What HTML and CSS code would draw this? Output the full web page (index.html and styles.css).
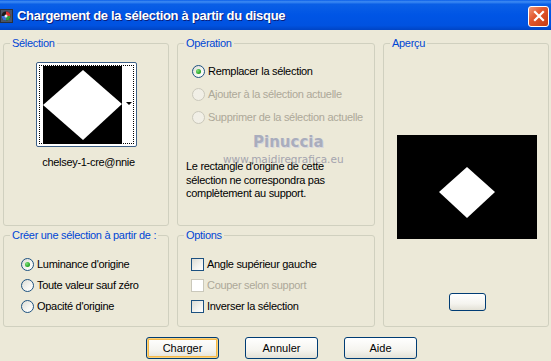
FILE: index.html
```html
<!DOCTYPE html>
<html lang="fr">
<head>
    <meta charset="UTF-8">
    <title>Chargement de la sélection à partir du disque</title>
    <link rel="stylesheet" href="styles.css">
</head>
<body>
    <div class="window">
        <div class="titlebar">
            <svg class="app-icon" width="13" height="14" viewBox="0 0 13 14">
                <rect x="0" y="0" width="13" height="14" fill="#2b2f3a"/>
                <rect x="1" y="1" width="11" height="12" fill="#4a5566"/>
                <circle cx="6" cy="7" r="4.5" fill="#1a1a1a"/>
                <path d="M6 2.5 A4.5 4.5 0 0 1 10.5 7 L6 7 Z" fill="#d33"/>
                <path d="M10.5 7 A4.5 4.5 0 0 1 6 11.5 L6 7 Z" fill="#2c9a3c"/>
                <path d="M6 11.5 A4.5 4.5 0 0 1 1.5 7 L6 7 Z" fill="#3a6fd8"/>
                <circle cx="6" cy="7" r="1.5" fill="#eee"/>
            </svg>
            <span class="title">Chargement de la sélection à partir du disque</span>
            <button class="close" aria-label="Fermer">
                <svg width="12" height="12" viewBox="0 0 12 12">
                    <path d="M2 2 L10 10 M10 2 L2 10" stroke="#fff" stroke-width="2.2" stroke-linecap="square"/>
                </svg>
            </button>
        </div>

        <div class="content">
            <div class="groups">
                <fieldset class="group group-sel">
                    <legend>Sélection</legend>
                    <div class="thumb">
                        <div class="thumb-focus">
                            <svg class="thumb-img" width="79" height="78" viewBox="0 0 79 78">
                                <rect width="79" height="78" fill="#000"/>
                                <polygon points="0,39 40,4 79,38 40,74" fill="#fff"/>
                            </svg>
                            <span class="thumb-drop"><i class="drop-arrow"></i></span>
                        </div>
                    </div>
                    <div class="thumb-name">chelsey-1-cre@nnie</div>
                </fieldset>

                <fieldset class="group group-op">
                    <legend>Opération</legend>
                    <div class="opt-list">
                        <label class="opt"><span class="radio checked"></span>Remplacer la sélection</label>
                        <label class="opt disabled"><span class="radio"></span>Ajouter à la sélection actuelle</label>
                        <label class="opt disabled"><span class="radio"></span>Supprimer de la sélection actuelle</label>
                    </div>
                    <p class="note">Le rectangle d'origine de cette<br>sélection ne correspondra pas<br>complètement au support.</p>
                    <span class="wm-name">Pinuccia</span>
                    <span class="wm-url">www.maidiregrafica.eu</span>
                </fieldset>

                <fieldset class="group group-preview">
                    <legend>Aperçu</legend>
                    <svg class="preview-img" width="140" height="104" viewBox="0 0 140 104">
                        <rect width="140" height="104" fill="#000"/>
                        <polygon points="42,57 70,32 98,57 70,83" fill="#fff"/>
                    </svg>
                    <button class="btn btn-small"></button>
                </fieldset>

                <fieldset class="group group-create">
                    <legend>Créer une sélection à partir de :</legend>
                    <div class="opt-list">
                        <label class="opt"><span class="radio checked"></span>Luminance d'origine</label>
                        <label class="opt"><span class="radio"></span>Toute valeur sauf zéro</label>
                        <label class="opt"><span class="radio"></span>Opacité d'origine</label>
                    </div>
                </fieldset>

                <fieldset class="group group-options">
                    <legend>Options</legend>
                    <div class="opt-list">
                        <label class="opt"><span class="check"></span>Angle supérieur gauche</label>
                        <label class="opt disabled"><span class="check"></span>Couper selon support</label>
                        <label class="opt"><span class="check"></span>Inverser la sélection</label>
                    </div>
                </fieldset>
            </div>

            <div class="actions">
                <button class="btn btn-default">Charger</button>
                <button class="btn">Annuler</button>
                <button class="btn">Aide</button>
            </div>
        </div>
    </div>
</body>
</html>
```

FILE: styles.css
```css
:root {
    --face: #ece9d8;
    --group-line: #d0d0bf;
    --label-blue: #0046d5;
    --ctl-border: #1c5180;
    --disabled: #aca899;
}
* { box-sizing: border-box; }
body { margin: 0; background: var(--face); font-family: "Liberation Sans", Arial, sans-serif; font-size: 11px; letter-spacing: -0.3px; color: #000; }
.window { width: 551px; height: 361px; overflow: hidden; background: var(--face); }

/* title bar */
.titlebar { height: 30px; display: flex; align-items: center; padding: 0 2px 0 0; background: linear-gradient(to bottom, #0a5de8 0%, #3f8cf3 6%, #0a5fe6 14%, #0055e5 50%, #0052e0 85%, #0044c4 100%); }
.app-icon { display: block; margin: 1px 4px 0 0; }
.title { flex: 1; color: #fff; font-weight: bold; font-size: 13px; letter-spacing: -0.3px; text-shadow: 1px 1px 0 #0a1e7a; padding-top: 1px; }
.close { width: 21px; height: 21px; padding: 0; border: 1px solid #fff; border-radius: 3px; background: linear-gradient(135deg, #f19879 0%, #e2582f 40%, #c63b12 100%); display: flex; align-items: center; justify-content: center; margin-top: 2px; }
.close svg { display: block; }

/* group boxes (legend follows the fieldset's left padding, so keep it at 0) */
.content { padding: 7px 0 0 3px; }
.groups { display: grid; grid-template-columns: 166px 198px 166px; grid-template-rows: 189px 98px; column-gap: 8px; row-gap: 3px; }
.group { margin: 0; padding: 0; min-width: 0; border: 1px solid var(--group-line); border-radius: 3px; position: relative; }
.group legend { margin-left: 6px; padding: 0 2px; line-height: 13px; color: var(--label-blue); white-space: nowrap; }
.group-sel { grid-column: 1; grid-row: 1; display: flex; flex-direction: column; align-items: center; padding-top: 12px; }
.group-op { grid-column: 2; grid-row: 1; padding-top: 13px; }
.group-preview { grid-column: 3; grid-row: 1 / 3; display: flex; flex-direction: column; align-items: center; padding-top: 85px; }
.group-create { grid-column: 1; grid-row: 2; padding-top: 14px; }
.group-options { grid-column: 2; grid-row: 2; padding-top: 14px; }

/* selection thumbnail */
.thumb { width: 101px; height: 85px; margin-left: 1px; border: 1px solid #3c5f86; border-radius: 2px; background: #fff; padding: 2px; }
.thumb-focus { height: 100%; border: 1px dotted #000; display: flex; padding: 0 0 0 3px; }
.thumb-img { display: block; }
.thumb-drop { flex: 1; display: flex; align-items: center; justify-content: flex-end; padding: 0 1px 3px 0; }
.drop-arrow { width: 0; height: 0; border-left: 3px solid transparent; border-right: 3px solid transparent; border-top: 3px solid #000; }
.thumb-name { margin-top: 9px; line-height: 13px; padding-left: 5px; }

/* radios and checkboxes */
.opt-list { display: flex; flex-direction: column; gap: 5px; }
.group-op .opt-list { gap: 7px; margin-left: 14px; }
.group-create .opt-list { margin-left: 17px; }
.group-options .opt-list { margin-left: 13px; }
.opt { display: flex; align-items: center; height: 16px; gap: 3px; white-space: nowrap; }
.opt.disabled { color: var(--disabled); }
.radio { width: 13px; height: 13px; border-radius: 50%; border: 1px solid var(--ctl-border); background: linear-gradient(135deg, #dcdcd4 0%, #f6f6f2 60%, #fff 100%); display: flex; align-items: center; justify-content: center; flex: none; }
.radio.checked::after { content: ''; width: 5px; height: 5px; border-radius: 50%; background: radial-gradient(circle at 35% 35%, #7fe07a, #21a121 70%); }
.opt.disabled .radio { border-color: #cac8bb; background: #f1efe6; }
.check { width: 13px; height: 13px; border: 1px solid var(--ctl-border); background: linear-gradient(135deg, #dcdcd4 0%, #f4f4f0 60%, #fff 100%); flex: none; }
.opt.disabled .check { border-color: #cac8bb; background: #fff; }

.note { margin: 35px 0 0 8px; line-height: 13.5px; }

/* watermark over the operation group */
.wm-name, .wm-url { position: absolute; white-space: nowrap; font-family: "DejaVu Sans", Verdana, sans-serif; letter-spacing: 0; }
.wm-name { left: 75px; top: 83px; font-size: 15px; font-weight: bold; color: #9ea3b9; opacity: 0.85; text-shadow: 1px 1px 0 #d4d4de; }
.wm-url { left: 45px; top: 103px; font-size: 10.5px; color: #9d9dab; opacity: 0.9; }

/* preview */
.preview-img { display: block; margin-left: 1px; }
.btn-small { width: 37px; height: 18px; margin-top: 54px; margin-left: 2px; }

/* buttons */
.btn { font: inherit; color: #000; border: 1px solid #003c74; border-radius: 3px; background: linear-gradient(to bottom, #fff 0%, #f5f4ef 60%, #e3e1d6 100%); padding: 0; }
.actions { display: flex; gap: 26px; padding: 10px 0 0 143px; }
.actions .btn { width: 73px; height: 22px; }
.btn-default { box-shadow: inset 0 0 0 1px #fbd27a, inset 0 0 0 2px #f5b949; }
```
